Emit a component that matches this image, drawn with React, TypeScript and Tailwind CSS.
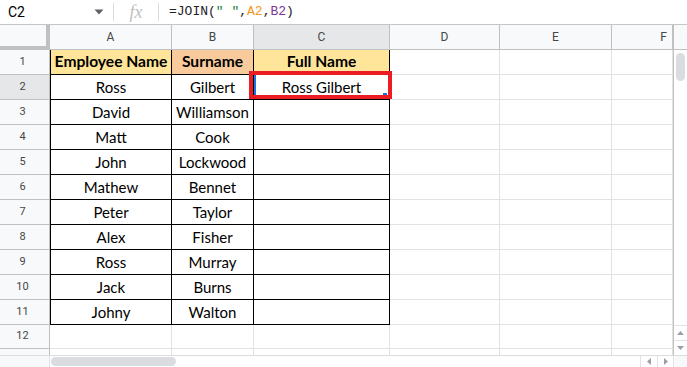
import React from "react";

const cols = [
  { key: "A", w: "w-[122px]" },
  { key: "B", w: "w-[82px]" },
  { key: "C", w: "w-[136px]" },
  { key: "D", w: "w-[110px]" },
  { key: "E", w: "w-[112px]" },
  { key: "F", w: "w-[61px]" },
];

const rows: [string, string, string][] = [
  ["Employee Name", "Surname", "Full Name"],
  ["Ross", "Gilbert", "Ross Gilbert"],
  ["David", "Williamson", ""],
  ["Matt", "Cook", ""],
  ["John", "Lockwood", ""],
  ["Mathew", "Bennet", ""],
  ["Peter", "Taylor", ""],
  ["Alex", "Fisher", ""],
  ["Ross", "Murray", ""],
  ["Jack", "Burns", ""],
  ["Johny", "Walton", ""],
];

const cellFont = { fontFamily: "Lato, 'Noto Sans', sans-serif" };

const FormulaBar = () => (
  <div className="h-[25px] shrink-0 border-b border-[#c4c7c5] flex items-center bg-white" style={{ fontFamily: "Roboto, sans-serif" }}>
    <div className="w-[113px] flex items-center pl-[8px] pr-[8px] text-[14px] text-black">
      <span className="flex-1">C2</span>
      <svg width="10" height="6" viewBox="0 0 10 6" className="mr-[1px]">
        <path d="M0.5 0.5 L9.5 0.5 L5 5.5 Z" fill="#5f6368" />
      </svg>
    </div>
    <div className="w-px h-[18px] bg-[#dadce0]" />
    <div className="w-[44px] flex justify-center">
      <span className="text-[#c0c0c0] text-[18px] italic leading-none" style={{ fontFamily: "'Liberation Serif', serif" }}>fx</span>
    </div>
    <div className="w-px h-[18px] bg-[#dadce0]" />
    <div className="pl-[10px] text-[13px] text-[#202124]" style={{ fontFamily: "'Liberation Mono', monospace" }}>
      =JOIN(<span className="text-[#188038]">" "</span>,<span className="text-[#f7981d]">A2</span>,<span className="text-[#7e3794]">B2</span>)
    </div>
  </div>
);

const HeaderRow = () => (
  <div className="flex h-[25px] shrink-0">
    <div className="w-[50px] h-full border-r-[4px] border-b-[4px] border-[#c0c0c0] bg-[#f8f9fa]" />
    {cols.map((c) => (
      <div
        key={c.key}
        className={`${c.w} h-full border-r border-b border-[#c0c0c0] flex items-center justify-center text-[12px] text-[#444746] ${
          c.key === "C" ? "bg-[#e6e7e8]" : "bg-[#f8f9fa]"
        }`}
        style={{ fontFamily: "Roboto, sans-serif" }}
      >
        <span className={c.key === "F" ? "ml-auto pr-[5px]" : ""}>{c.key}</span>
      </div>
    ))}
  </div>
);

const RowNum = ({ n, active }: { n: number; active?: boolean }) => (
  <div
    className={`w-[50px] h-full border-r border-b border-[#c0c0c0] flex items-center justify-center text-[11px] text-[#444746] pr-[4px] ${
      active ? "bg-[#e6e7e8]" : "bg-[#f8f9fa]"
    }`}
    style={{ fontFamily: "Roboto, sans-serif" }}
  >
    {n}
  </div>
);

const DataRow = ({ idx }: { idx: number }) => {
  const r = rows[idx];
  const isHead = idx === 0;
  const n = idx + 1;
  const fills = isHead ? ["bg-[#ffe599]", "bg-[#f9cb9c]", "bg-[#ffe599]"] : ["bg-white", "bg-white", "bg-white"];
  return (
    <div className="flex h-[25px] shrink-0">
      <RowNum n={n} active={n === 2} />
      {r.map((t, i) => (
        <div
          key={i}
          className={`${cols[i].w} h-full border-r border-b border-black ${i === 0 ? "border-l" : ""} ${fills[i]} flex items-center justify-center text-black ${
            isHead ? "font-bold text-[15.6px]" : "text-[15px]"
          } ${n === 2 && i === 2 ? "relative" : ""}`}
          style={cellFont}
        >
          {t}
          {n === 2 && i === 2 && (
            <>
              <div className="absolute left-0 top-0 bottom-0 w-[2px] bg-[#1a73e8]" />
              <div className="absolute right-[2px] bottom-[2px] w-[4px] h-[4px] bg-[#1a73e8]" />
              <div className="absolute left-[-5px] right-[-3px] top-[-4px] bottom-[0px] border-[4px] border-[#ec1c24]" />
            </>
          )}
        </div>
      ))}
      {cols.slice(3).map((c) => (
        <div key={c.key} className={`${c.w} h-full border-r border-b border-[#e2e2e2] bg-white`} />
      ))}
    </div>
  );
};

const EmptyRow = ({ n, h }: { n: number; h: string }) => (
  <div className={`flex ${h} shrink-0`}>
    <RowNum n={n} />
    {cols.map((c) => (
      <div key={c.key} className={`${c.w} h-full border-r border-b border-[#e2e2e2] bg-white`} />
    ))}
  </div>
);

const VScroll = () => (
  <div className="w-[14px] border-l border-[#c0c0c0] bg-white flex flex-col">
    <div className="h-[25px] shrink-0 bg-[#f8f9fa] border-b border-[#c0c0c0]" />
    <div className="flex-1 relative">
      <div className="absolute left-[2px] right-[2px] top-[3px] h-[28px] rounded-full bg-[#dadce0]" />
    </div>
    <div className="h-[15px] shrink-0 border-t border-[#e2e2e2] flex items-center justify-center">
      <svg width="7" height="4" viewBox="0 0 7 4"><path d="M0 4 L3.5 0 L7 4 Z" fill="#9aa0a6" /></svg>
    </div>
    <div className="h-[15px] shrink-0 border-t border-[#e2e2e2] flex items-center justify-center">
      <svg width="7" height="4" viewBox="0 0 7 4"><path d="M0 0 L3.5 4 L7 0 Z" fill="#9aa0a6" /></svg>
    </div>
  </div>
);

const HScroll = () => (
  <div className="h-[12px] shrink-0 flex border-t border-[#dadce0] bg-white">
    <div className="w-[50px] bg-[#f8f9fa] border-r border-[#e2e2e2]" />
    <div className="flex-1 relative">
      <div className="absolute left-[1px] top-[1px] w-[125px] h-[9px] rounded-full bg-[#dadce0]" />
    </div>
    <div className="w-[17px] border-l border-[#e2e2e2] flex items-center justify-center">
      <svg width="4" height="7" viewBox="0 0 4 7"><path d="M4 0 L0 3.5 L4 7 Z" fill="#9aa0a6" /></svg>
    </div>
    <div className="w-[16px] border-l border-[#e2e2e2] flex items-center justify-center">
      <svg width="4" height="7" viewBox="0 0 4 7"><path d="M0 0 L4 3.5 L0 7 Z" fill="#9aa0a6" /></svg>
    </div>
    <div className="w-[14px] border-l border-[#e2e2e2] bg-[#f8f9fa]" />
  </div>
);

export default function App() {
  return (
    <div className="w-[687px] h-[367px] overflow-hidden bg-white flex flex-col">
      <FormulaBar />
      <div className="flex flex-1 min-h-0">
        <div className="w-[673px] flex flex-col overflow-hidden">
          <HeaderRow />
          {rows.map((_, i) => (
            <DataRow key={i} idx={i} />
          ))}
          <EmptyRow n={12} h="h-[24px]" />
          <EmptyRow n={13} h="h-[25px]" />
        </div>
        <VScroll />
      </div>
      <HScroll />
    </div>
  );
}
